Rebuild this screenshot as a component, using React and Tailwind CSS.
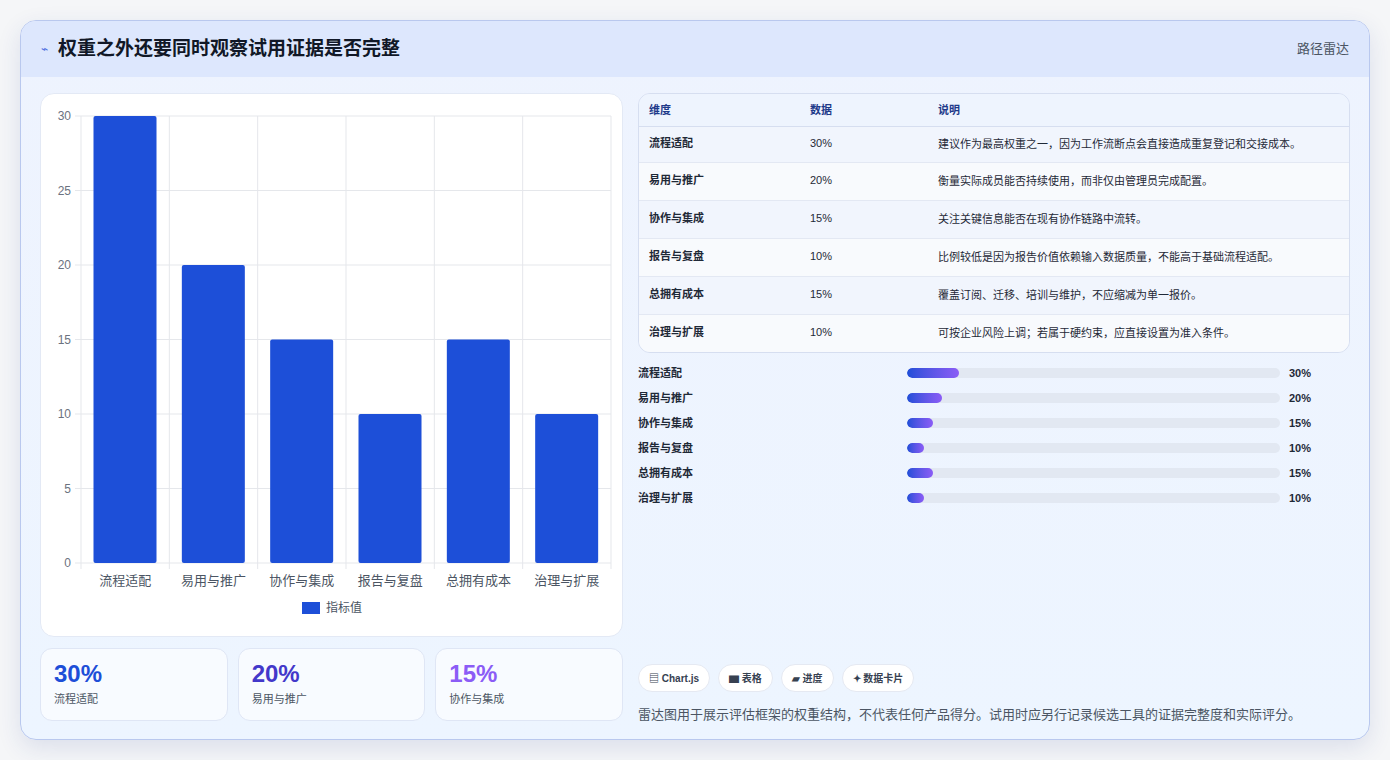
export default function App() {
  const data = [
    ["流程适配", 30, "建议作为最高权重之一，因为工作流断点会直接造成重复登记和交接成本。"],
    ["易用与推广", 20, "衡量实际成员能否持续使用，而非仅由管理员完成配置。"],
    ["协作与集成", 15, "关注关键信息能否在现有协作链路中流转。"],
    ["报告与复盘", 10, "比例较低是因为报告价值依赖输入数据质量，不能高于基础流程适配。"],
    ["总拥有成本", 15, "覆盖订阅、迁移、培训与维护，不应缩减为单一报价。"],
    ["治理与扩展", 10, "可按企业风险上调；若属于硬约束，应直接设置为准入条件。"],
  ];
  const L = 40, T = 22, R = 570, B = 469, cw = (R - L) / 6;
  const font = { fontFamily: '"Liberation Sans","Noto Sans CJK SC",sans-serif' };
  return (
    <div className="w-[1390px] h-[760px] bg-[#f5f6f8] p-[20px]" style={font}>
      <div className="w-[1350px] h-[720px] rounded-[16px] border border-[#b9c8ee] overflow-hidden bg-gradient-to-b from-[#eef3fe] to-[#edf5ff] shadow-[0_8px_24px_rgba(30,60,140,0.12)] flex flex-col">
        <div className="h-[56px] bg-[#dde7fd] flex items-center justify-between px-[20px] shrink-0">
          <div className="flex items-center gap-[10px]">
            <span className="text-[#4f6fe0] text-[12px]">⌁</span>
            <span className="text-[19px] font-bold text-[#111827]">权重之外还要同时观察试用证据是否完整</span>
          </div>
          <span className="text-[13px] text-[#4b5563]">路径雷达</span>
        </div>
        <div className="flex gap-[15px] px-[19px] pt-[16px]">
          <div className="w-[583px] flex flex-col gap-[11px]">
            <div className="h-[544px] bg-white rounded-[14px] border border-[#e3e9f5]">
              <svg width="581" height="542">
                {[0, 5, 10, 15, 20, 25, 30].map((v) => {
                  const y = B - (v / 30) * (B - T);
                  return (
                    <g key={v}>
                      <line x1={L - 6} x2={R} y1={y} y2={y} stroke="#e5e7eb" />
                      <text x={L - 10} y={y + 4} textAnchor="end" fontSize="12" fill="#6b7280">{v}</text>
                    </g>
                  );
                })}
                {[0, 1, 2, 3, 4, 5, 6].map((i) => (
                  <line key={i} x1={L + i * cw} x2={L + i * cw} y1={T} y2={B + 6} stroke="#e5e7eb" />
                ))}
                {data.map(([n, v], i) => {
                  const y = B - (v / 30) * (B - T);
                  return (
                    <g key={n}>
                      <rect x={L + i * cw + 12.5} y={y} width="63" height={B - y} rx="2" fill="#1d4fd8" />
                      <text x={L + i * cw + cw / 2} y={B + 22} textAnchor="middle" fontSize="13" fill="#4b5563">{n}</text>
                    </g>
                  );
                })}
                <rect x="261" y="508" width="18" height="12" fill="#1d4fd8" />
                <text x="285" y="518" fontSize="12" fill="#4b5563">指标值</text>
              </svg>
            </div>
            <div className="flex gap-[10px]">
              {[["30%", "流程适配", "text-[#1d4ed8]"], ["20%", "易用与推广", "text-[#4338ca]"], ["15%", "协作与集成", "text-[#8b5cf6]"]].map(([v, l, c]) => (
                <div key={l} className="w-[188px] h-[73px] bg-[#f8fbff] rounded-[12px] border border-[#dfe6f5] px-[13px] pt-[10px]">
                  <div className={`text-[24px] font-bold leading-[30px] ${c}`}>{v}</div>
                  <div className="text-[11px] text-[#4b5563] mt-[2px]">{l}</div>
                </div>
              ))}
            </div>
          </div>
          <div className="w-[714px] flex flex-col">
            <div className="rounded-[12px] border border-[#d6def0] overflow-hidden text-[11px] text-[#1f2937]">
              <div className="flex h-[33px] items-center bg-[#eef4fe] border-b border-[#d6def0] text-[#1e3a8a] font-bold">
                <div className="w-[171px] pl-[10px]">维度</div>
                <div className="w-[128px]">数据</div>
                <div className="flex-1">说明</div>
              </div>
              {data.map(([n, v, d], i) => (
                <div key={n} className={`flex border-b border-[#e3e8f3] last:border-b-0 ${i % 2 ? "bg-[#f8fafd]" : "bg-[#f1f5fd]"} ${i === 0 ? "py-[9px]" : "py-[10px]"}`}>
                  <div className="w-[171px] pl-[10px] leading-[15px] font-semibold">{n}</div>
                  <div className="w-[128px] leading-[15px]">{v}%</div>
                  <div className="w-[380px] leading-[17px]">{d}</div>
                </div>
              ))}
            </div>
            <div className="flex flex-col gap-[9px] mt-[12px]">
              {data.map(([n, v]) => (
                <div key={n} className="flex items-center h-[16px] text-[11px] text-[#1f2937] font-semibold">
                  <div className="w-[269px]">{n}</div>
                  <div className="w-[373px] h-[10px] rounded-full bg-[#e2e8f2] overflow-hidden">
                    <div className="h-full rounded-full bg-gradient-to-r from-[#1d4ed8] to-[#8b5cf6]" style={{ width: `${(v / 30) * 14}%` }} />
                  </div>
                  <div className="ml-[9px] font-bold">{v}%</div>
                </div>
              ))}
            </div>
            <div className="flex gap-[8px] mt-[158px]">
              {["▤ Chart.js", "▆ 表格", "▰ 进度", "✦ 数据卡片"].map((c) => (
                <span key={c} className="h-[28px] px-[10px] rounded-full bg-white border border-[#e5e9f2] text-[10px] font-bold text-[#374151] flex items-center">{c}</span>
              ))}
            </div>
            <div className="mt-[13px] text-[13px] text-[#4b5563]">雷达图用于展示评估框架的权重结构，不代表任何产品得分。试用时应另行记录候选工具的证据完整度和实际评分。</div>
          </div>
        </div>
      </div>
    </div>
  );
}
